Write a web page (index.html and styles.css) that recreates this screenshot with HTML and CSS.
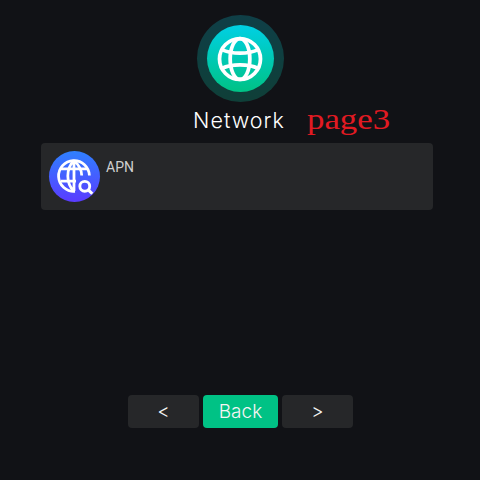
FILE: index.html
```html
<!DOCTYPE html>
<html lang="en">
<head>
<meta charset="utf-8">
<title>Network</title>
<link rel="stylesheet" href="styles.css">
</head>
<body>
<div class="screen">
  <header class="header">
    <div class="halo">
      <div class="disc">
        <svg class="globe" viewBox="0 0 44 44" fill="none" stroke="#fff" stroke-width="3.6">
          <circle cx="22" cy="22" r="19.6"/>
          <ellipse cx="22" cy="22" rx="9.4" ry="19.6"/>
          <path d="M4.500 13C14 17.500 30 17.500 39.500 13M4.500 31C14 26.500 30 26.500 39.500 31"/>
        </svg>
      </div>
    </div>
    <div class="title-row">
      <span class="title">Network</span>
      <span class="page-tag">page3</span>
    </div>
  </header>
  <section class="card">
    <div class="card-icon">
      <svg class="apn-globe" viewBox="0 0 36 36" fill="none" stroke="#fff" stroke-width="2.7">
        <path d="M18.500 32.500A15 15 0 1 1 32.500 17"/>
        <path d="M17.500 2.500C9.500 10.500 9.500 24.500 17.500 32.500M17.500 2.500C23 7.500 25 12 25 17M17.500 2.500V32"/>
        <path d="M4.500 10.500H30.500M4.500 22.500H19.500"/>
        <circle cx="28" cy="27.500" r="4.800" stroke-width="2.800"/>
        <path d="M31.700 31.200L35.300 34.800" stroke-width="3"/>
      </svg>
    </div>
    <span class="card-label">APN</span>
  </section>
  <nav class="nav">
    <button class="btn">&lt;</button>
    <button class="btn btn-primary">Back</button>
    <button class="btn">&gt;</button>
  </nav>
</div>
</body>
</html>
```
FILE: styles.css
```css
* { box-sizing: border-box; }
html, body { margin: 0; padding: 0; }
body { width: 480px; height: 480px; background: #111216; overflow: hidden; }
.screen { height: 480px; display: flex; flex-direction: column; font-family: Inter, "Liberation Sans", sans-serif; color: #fff; }
.header { display: flex; flex-direction: column; align-items: center; padding-top: 15px; }
.halo { width: 87px; height: 87px; border-radius: 50%; background: linear-gradient(180deg, #0f3f47, #0f3f38); display: flex; align-items: center; justify-content: center; }
.disc { width: 67px; height: 67px; border-radius: 50%; background: linear-gradient(180deg, #00d0e4, #00c285); display: flex; align-items: center; justify-content: center; }
.globe { width: 46px; height: 46px; display: block; }
.title-row { position: relative; height: 41px; display: flex; align-items: center; padding-bottom: 5px; margin-left: -2px; }
.title { font-size: 21.500px; line-height: 26px; letter-spacing: 1px; font-weight: 350; color: #fff; }
.page-tag { position: absolute; left: 114px; top: 1px; font-family: "Liberation Serif", serif; font-size: 30px; line-height: 32px; color: #e21a22; white-space: nowrap; transform: scaleX(1.160); transform-origin: left center; }
.card { margin: 0 47px 0 41px; height: 67px; background: #262729; border-radius: 4px; display: flex; align-items: flex-start; padding: 8px; }
.card-icon { width: 51px; height: 51px; border-radius: 50%; background: linear-gradient(180deg, #2f80ff, #5a3cff); display: flex; align-items: center; justify-content: center; flex: none; }
.apn-globe { width: 37px; height: 37px; display: block; overflow: visible; }
.card-label { margin: 8px 0 0 6px; font-family: Roboto, sans-serif; font-size: 14px; line-height: 17px; color: #cfcfcf; }
.nav { margin-top: 185px; display: flex; justify-content: center; gap: 4px; margin-left: 1px; }
.btn { height: 33px; width: 71px; border: 0; border-radius: 4px; background: #262729; color: #f4f4f4; font-family: Inter, sans-serif; font-size: 19px; font-weight: 350; padding: 0; }
.btn-primary { width: 75px; background: #00c285; }
```
